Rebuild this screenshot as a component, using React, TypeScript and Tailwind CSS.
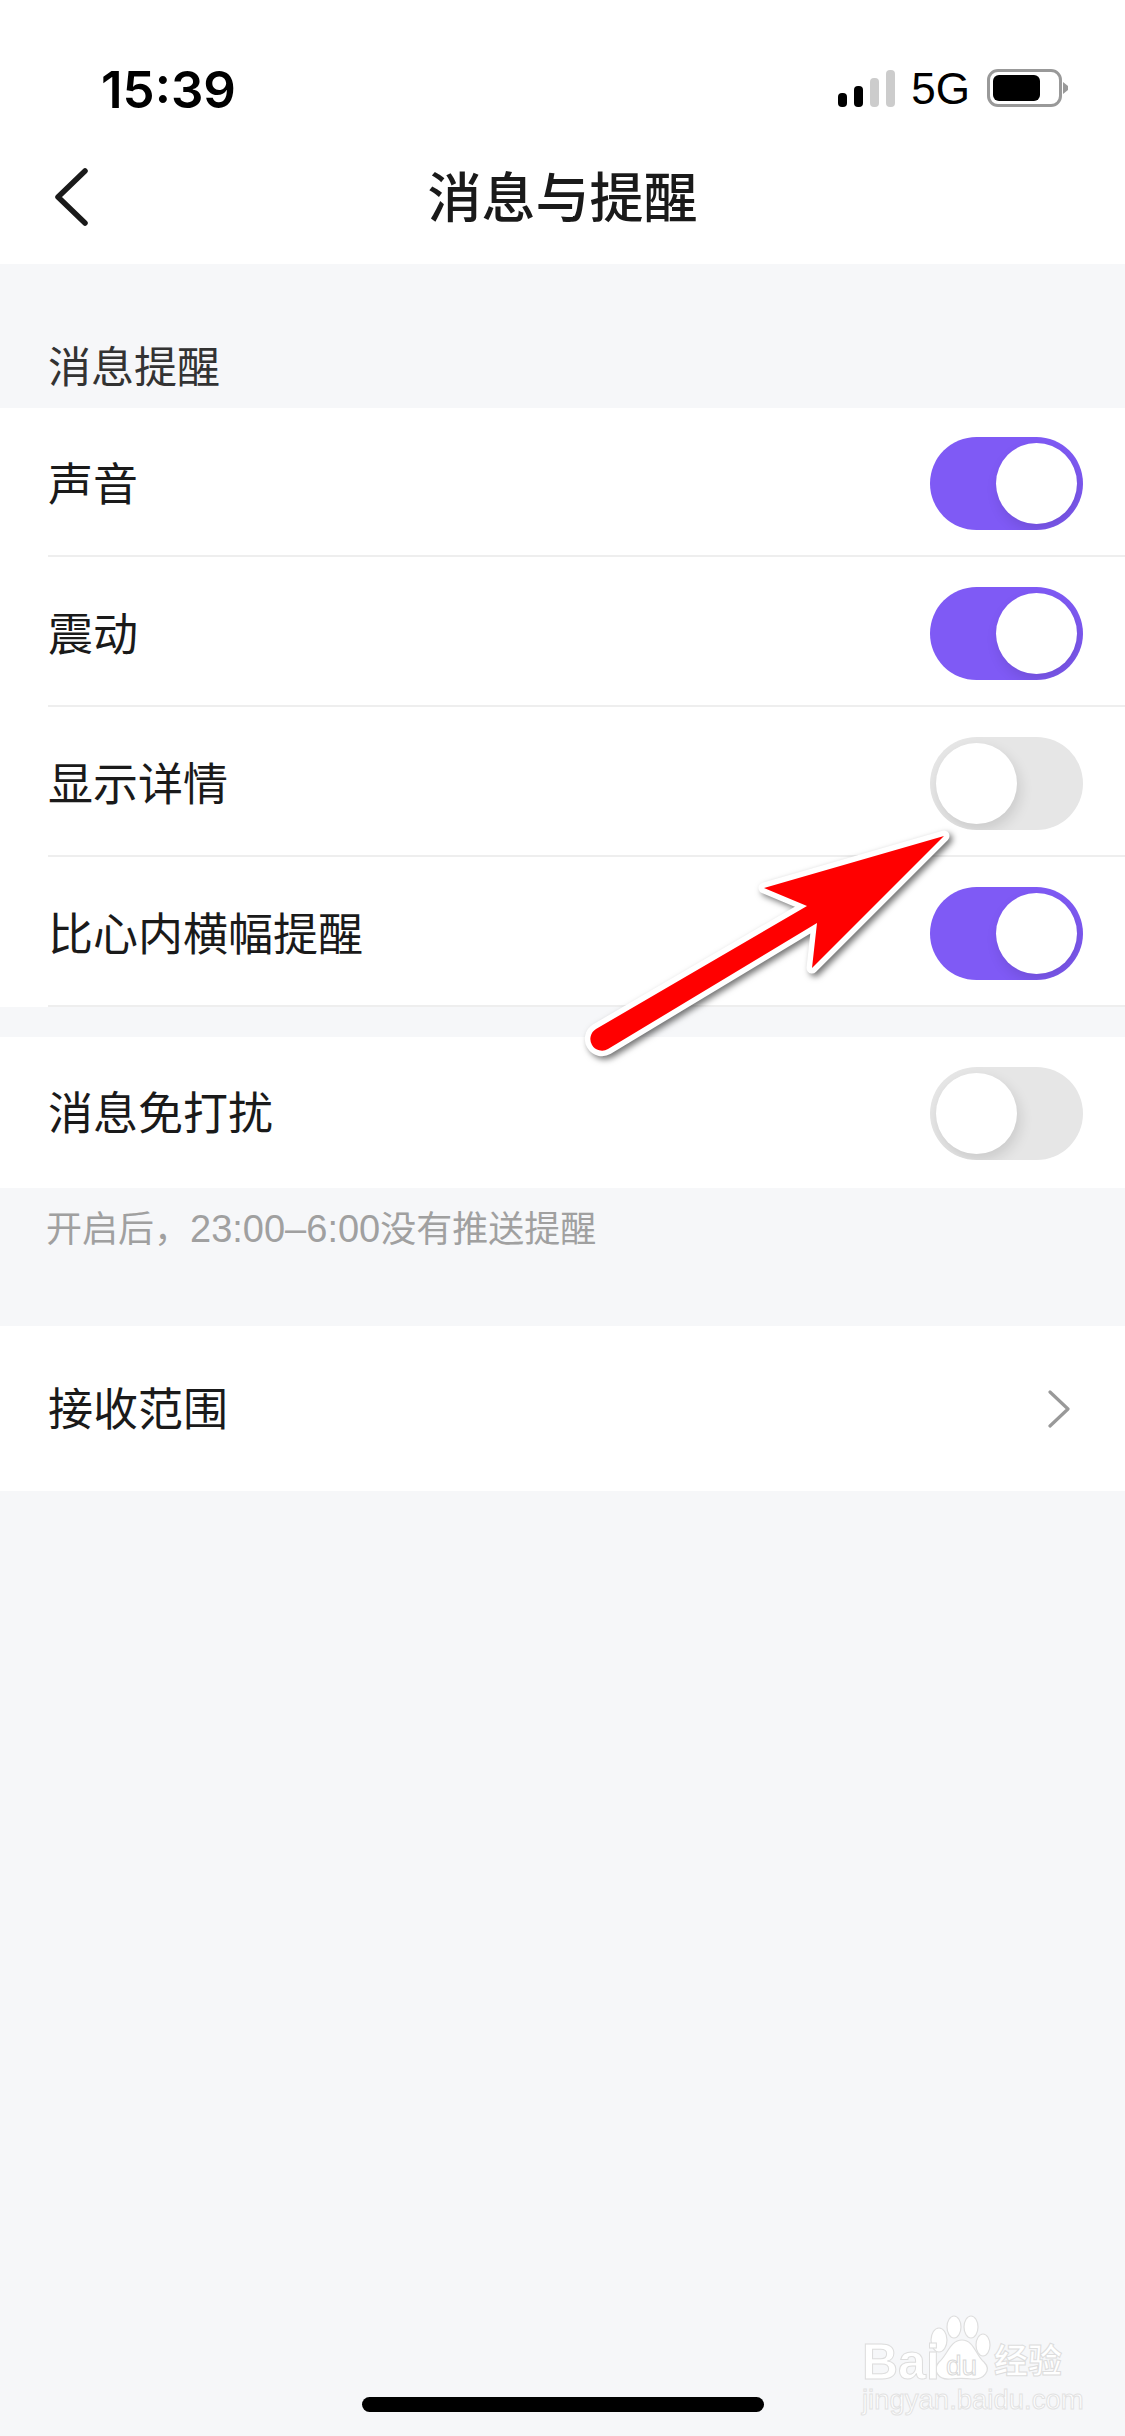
import React from "react";

const rows = [
  { label: "声音", on: true, h: "h-[149px]" },
  { label: "震动", on: true, h: "h-[150px]" },
  { label: "显示详情", on: false, h: "h-[150px]" },
  { label: "比心内横幅提醒", on: true, h: "h-[150px]" },
];

function Toggle({ on }: { on: boolean }) {
  return (
    <div
      className={`flex h-[93px] w-[153px] shrink-0 items-center overflow-hidden rounded-full px-[6px] ${
        on ? "justify-end bg-[#7f5af5]" : "justify-start bg-[#e6e6e6]"
      }`}
    >
      <div className="h-[81px] w-[81px] rounded-full bg-white shadow-[3px_6px_14px_rgba(0,0,0,0.12)]" />
    </div>
  );
}

function StatusBar() {
  return (
    <div className="box-content flex h-[38px] items-end justify-between pl-[101px] pr-[56px] pt-[69px]">
      <span className="mb-[-2px] font-['Inter',sans-serif] text-[51px] font-semibold leading-[38px] text-black">15:39</span>
      <div className="flex items-end">
        <div className="flex items-end gap-[6.5px]">
          <div className="h-[14px] w-[9.5px] rounded-[4px] bg-black" />
          <div className="h-[21px] w-[9.5px] rounded-[4px] bg-black" />
          <div className="h-[29px] w-[9.5px] rounded-[4px] bg-[#cccccc]" />
          <div className="h-[37px] w-[9.5px] rounded-[4px] bg-[#cccccc]" />
        </div>
        <span className="ml-[16px] text-[44px] leading-[36px] text-black">5G</span>
        <div className="ml-[17px] flex items-center">
          <div className="h-[38px] w-[75px] rounded-[11px] border-[3px] border-[#999999] p-[3px]">
            <div className="h-full w-[47px] rounded-[6px] bg-black" />
          </div>
          <svg width="6" height="12" viewBox="0 0 6 12" className="ml-[1px]">
            <path d="M0 0 L5 4 L5 8 L0 12 Z" fill="#999999" />
          </svg>
        </div>
      </div>
    </div>
  );
}

function Watermark() {
  return (
    <div className="absolute left-[860px] top-[2312px] h-[104px] w-[206px] text-white">
      <svg width="206" height="70" viewBox="0 0 206 70" className="absolute left-0 top-0">
        <g fill="#ffffff" stroke="#dedede" strokeWidth="1.2">
          <ellipse cx="79" cy="28" rx="8" ry="12" />
          <ellipse cx="94" cy="15" rx="7" ry="11" />
          <ellipse cx="111" cy="15" rx="7" ry="11" />
          <ellipse cx="123" cy="33" rx="7" ry="11" />
          <path d="M102 28 C114 28 116 44 124 50 C132 58 124 68 112 67 C104 66 98 66 90 67 C78 68 72 58 79 50 C87 44 90 28 102 28 Z" />
        </g>
      </svg>
      <span className="absolute left-[2px] top-[25px] text-[50px] font-bold leading-[50px] [-webkit-text-stroke:1px_#dddddd]">
        Bai
      </span>
      <span className="absolute left-[86px] top-[38px] text-[28px] leading-[32px] [-webkit-text-stroke:1px_#d8d8d8]">
        du
      </span>
      <span className="absolute left-[134px] top-[27px] text-[34px] font-bold leading-[44px] [-webkit-text-stroke:1px_#dddddd]">
        经验
      </span>
      <span className="absolute left-[2px] top-[75px] text-[27.5px] leading-[26px] [-webkit-text-stroke:1px_#e2e2e2]">
        jingyan.baidu.com
      </span>
    </div>
  );
}

function RedArrow() {
  return (
    <svg
      className="pointer-events-none absolute left-0 top-0 drop-shadow-[3px_3px_3px_rgba(0,0,0,0.55)]"
      width="1125"
      height="1100"
      viewBox="0 0 1125 1100"
    >
      <path
        d="M944 836 L764 888 L807 906 L596 1029 A11.5 11.5 0 0 0 608 1049 L817 923 L812 968 Z"
        fill="#ff0000"
        stroke="#ffffff"
        strokeWidth="11"
        strokeLinejoin="round"
        paintOrder="stroke"
      />
    </svg>
  );
}

export default function App() {
  return (
    <div className="relative flex min-h-[2436px] w-[1125px] flex-col overflow-hidden bg-[#f6f7f9] font-['Liberation_Sans','Noto_Sans_CJK_SC',sans-serif]">
      {/* header */}
      <div className="h-[264px] bg-white">
        <StatusBar />
        <div className="mt-[42px] grid h-[96px] grid-cols-[1fr_auto_1fr] items-center pl-[54px]">
          <svg width="36" height="60" viewBox="0 0 36 60">
            <path
              d="M31 4 L4 30 L31 56"
              fill="none"
              stroke="#1a1a1a"
              strokeWidth="5.5"
              strokeLinecap="round"
              strokeLinejoin="round"
            />
          </svg>
          <h1 className="-ml-[54px] mt-[4px] text-[54px] font-medium leading-none text-[#1a1a1a]">消息与提醒</h1>
          <div />
        </div>
      </div>

      {/* section title */}
      <div className="flex h-[144px] items-end pb-[17px] pl-[48px] text-[43px] leading-[46px] text-[#333333]">
        消息提醒
      </div>

      <div className="bg-white pl-[48px]">
        {rows.map((row) => (
          <div
            key={row.label}
            className={`flex items-center justify-between border-b-2 border-[#eeeeee] pr-[42px] pt-[4px] ${row.h}`}
          >
            <span className="mt-[4px] text-[45px] leading-none text-[#1a1a1a]">{row.label}</span>
            <Toggle on={row.on} />
          </div>
        ))}
      </div>

      <div className="mt-[30px] flex h-[151px] items-center justify-between bg-white pl-[48px] pr-[42px] pt-[2px]">
        <span className="mt-[2px] text-[45px] leading-none text-[#1a1a1a]">消息免打扰</span>
        <Toggle on={false} />
      </div>

      <div className="flex h-[138px] items-start pl-[46px] pt-[21px] text-[36px] leading-[40px] text-[#a0a0a0]">
        <span>
          开启后，<span className="text-[38px]">23:00–6:00</span>没有推送提醒
        </span>
      </div>

      <div className="flex h-[165px] items-center justify-between bg-white pl-[48px] pr-[54px]">
        <span className="mt-[4px] text-[45px] leading-none text-[#1a1a1a]">接收范围</span>
        <svg width="24" height="38" viewBox="0 0 24 38">
          <path
            d="M3 2 L21 19 L3 36"
            fill="none"
            stroke="#999999"
            strokeWidth="3.2"
            strokeLinecap="round"
            strokeLinejoin="round"
          />
        </svg>
      </div>

      <div className="flex-1" />

      {/* home bar */}
      <div className="flex justify-center pb-[24px]">
        <div className="h-[15px] w-[402px] rounded-full bg-black" />
      </div>

      <RedArrow />
      <Watermark />
    </div>
  );
}
